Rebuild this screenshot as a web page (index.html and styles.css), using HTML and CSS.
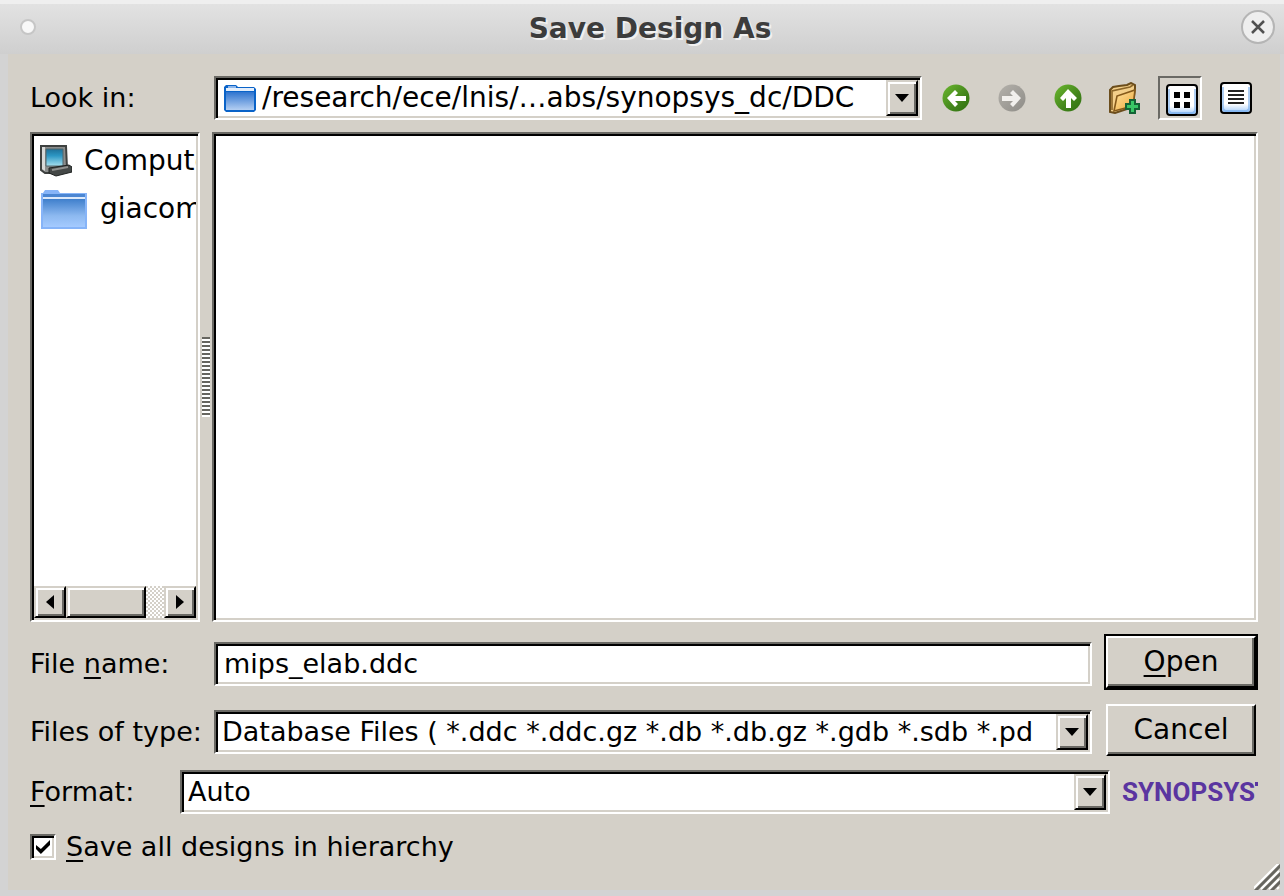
FILE: index.html
```html
<!DOCTYPE html>
<html lang="en">
<head>
<meta charset="utf-8">
<title>Save Design As</title>
<link rel="stylesheet" href="styles.css">
</head>
<body>
<svg class="defs" aria-hidden="true">
  <defs>
    <linearGradient id="green" x1="0" y1="0" x2="1" y2="1"><stop offset="0" stop-color="#6cb82f"/><stop offset=".6" stop-color="#43851c"/><stop offset="1" stop-color="#2f7010"/></linearGradient>
    <linearGradient id="gray" x1="0" y1="0" x2="1" y2="1"><stop offset="0" stop-color="#b4b1ab"/><stop offset="1" stop-color="#8e8c87"/></linearGradient>
    <linearGradient id="blue" x1="0" y1="0" x2="0" y2="1"><stop offset="0" stop-color="#2f74cf"/><stop offset="1" stop-color="#b4cff2"/></linearGradient>
    <linearGradient id="sky" x1="0" y1="0" x2="0" y2="1"><stop offset="0" stop-color="#3f7fcc"/><stop offset=".6" stop-color="#8db9f0"/><stop offset="1" stop-color="#a4caff"/></linearGradient>
    <linearGradient id="screen" x1="0" y1="0" x2="0" y2="1"><stop offset="0" stop-color="#1d6f98"/><stop offset=".4" stop-color="#2c97c4"/><stop offset="1" stop-color="#a5e0ef"/></linearGradient>
    <linearGradient id="gold" x1="0" y1="0" x2="1" y2="1"><stop offset="0" stop-color="#ffe3a0"/><stop offset="1" stop-color="#eea93c"/></linearGradient>
    <linearGradient id="tile" x1="0" y1="0" x2="0" y2="1"><stop offset="0" stop-color="#fff"/><stop offset=".7" stop-color="#fff"/><stop offset="1" stop-color="#9cc8fa"/></linearGradient>
  </defs>
</svg>
<form class="window">
  <header class="titlebar">
    <span class="menu-dot"></span>
    <h1 class="title">Save Design As</h1>
    <button type="button" class="close" aria-label="Close">
      <svg width="36" height="36" viewBox="0 0 36 36"><circle cx="18" cy="18" r="16" fill="#eee" stroke="#b5b5b5" stroke-width="2"/><path d="M12 12l12 12M24 12L12 24" stroke="#505050" stroke-width="2.500"/></svg>
    </button>
  </header>
  <main class="content">
    <div class="look-row">
      <label class="label" for="dir">Look in:</label>
      <div class="sunken combo look">
        <svg class="combo-icon" width="32" height="28" viewBox="0 0 32 28"><path d="M0 26V3l2-2h10l2 2h16l2 2v21l-2 2H2z" fill="#0a63c8"/><path d="M2 4h28v3H2z" fill="#e4eefb"/><path d="M4 2h8v2H4z" fill="#8cb6ec"/><path d="M2 8h28v18H2z" fill="url(#blue)"/></svg>
        <select class="field path" id="dir"><option>/research/ece/lnis/…abs/synopsys_dc/DDC</option></select>
        <span class="raised arrow"><svg width="16" height="8" viewBox="0 0 16 8"><path d="M1 0h14L8 8z"/></svg></span>
      </div>
      <div class="tools">
        <button type="button" class="tool" aria-label="Back"><svg width="28" height="28" viewBox="0 0 28 28"><circle cx="14" cy="14" r="13.500" fill="url(#green)"/><path d="M5 14l8-8 3 3-3 3h11v5H13l3 3-3 3z" fill="#fff"/></svg></button>
        <button type="button" class="tool" aria-label="Forward" disabled><svg width="28" height="28" viewBox="0 0 28 28"><circle cx="14" cy="14" r="13.500" fill="url(#gray)"/><path d="M23 14l-8-8-3 3 3 3H4v5h11l-3 3 3 3z" fill="#f2f0ed"/></svg></button>
        <button type="button" class="tool" aria-label="Parent directory"><svg width="28" height="28" viewBox="0 0 28 28"><circle cx="14" cy="14" r="13.500" fill="url(#green)"/><path d="M14 5l9 9-3 3-3-3v10h-5V14l-3 3-3-3z" fill="#fff"/></svg></button>
        <button type="button" class="tool" aria-label="Create new folder"><svg width="32" height="32" viewBox="0 0 32 32"><path d="M2 30V8l3-3 6-1 8-1 4-2 4 2v3l-2 19-18 6z" fill="#f3cf8a" stroke="#6b4d1c" stroke-width="2"/><path d="M4 28V9l18-4 3-2" fill="none" stroke="#8a6528" stroke-width="1.6"/><path d="M6 29L9 14 27 8l-2 16z" fill="url(#gold)" stroke="#85591a" stroke-width="1.6"/><path d="M22 18h5v4h4v5h-4v4h-5v-4h-4v-5h4z" fill="#39c766" stroke="#146336" stroke-width="2"/></svg></button>
        <button type="button" class="tool pressed" aria-label="List view" aria-pressed="true"><svg width="32" height="32" viewBox="0 0 32 32"><rect x="1" y="1" width="30" height="30" rx="3" fill="url(#tile)" stroke="#000" stroke-width="2"/><path d="M3 5v22l2 2h22l2-2V5" fill="none" stroke="#5d9ee8" stroke-opacity=".5" stroke-width="2"/><path d="M8 8h6v6H8zM18 8h6v6h-6zM8 18h6v6H8zM18 18h6v6h-6z"/></svg></button>
        <button type="button" class="tool" aria-label="Detail view"><svg width="32" height="32" viewBox="0 0 32 32"><rect x="1" y="1" width="30" height="30" rx="3" fill="url(#tile)" stroke="#000" stroke-width="2"/><path d="M3 5v22l2 2h22l2-2V5" fill="none" stroke="#5d9ee8" stroke-opacity=".5" stroke-width="2"/><path d="M8 9h16M8 13h16M8 17h16M8 21h16" stroke="#222" stroke-width="2"/></svg></button>
      </div>
    </div>

    <div class="panes">
      <nav class="sunken sidebar" aria-label="Places">
        <ul class="places">
          <li class="place"><svg width="32" height="32" viewBox="0 0 32 32"><path d="M1 1h25l1 22-7 5H5l-4-3z" fill="#8b8d8c" stroke="#3e4140" stroke-width="2"/><path d="M2 2h3v24l-3-2z" fill="#d7d9d8"/><path d="M6 4h17v17H6z" fill="url(#screen)" stroke="#50666d"/><path d="M9 23l20-3 3 2v5l-16 4-7-3z" fill="#444847" stroke="#1f2221"/><path d="M12 25l16-3" stroke="#90918f" stroke-width="2"/></svg><span>Computer</span></li>
          <li class="place"><svg width="48" height="40" viewBox="0 -2 48 40"><path d="M1 38V2h2l2-3h13l2 3h27v36z" fill="#86b4f8"/><path d="M3 3h42v3H3z" fill="#4b86d2"/><path d="M3 6h42v2H3z" fill="#dce9fb"/><path d="M3 8h42v28H3z" fill="url(#sky)"/></svg><span>giacom</span></li>
        </ul>
        <div class="scrollbar">
          <button type="button" class="raised step" aria-label="Scroll left"><svg width="8" height="14" viewBox="0 0 8 14"><path d="M8 0v14L0 7z"/></svg></button>
          <span class="raised thumb"></span>
          <span class="track"></span>
          <button type="button" class="raised step" aria-label="Scroll right"><svg width="8" height="14" viewBox="0 0 8 14"><path d="M0 0v14l8-7z"/></svg></button>
        </div>
      </nav>
      <div class="splitter"><span class="grip"></span></div>
      <section class="sunken files" aria-label="Files"></section>
    </div>

    <div class="file-grid">
      <label class="label" for="name">File <u>n</u>ame:</label>
      <div class="sunken combo"><input class="field name" id="name" type="text" value="mips_elab.ddc"></div>
      <button type="submit" class="push default"><span><u>O</u>pen</span></button>
      <label class="label" for="type">Files of type:</label>
      <div class="sunken combo">
        <select class="field" id="type"><option>Database Files ( *.ddc *.ddc.gz *.db *.db.gz *.gdb *.sdb *.pd</option></select>
        <span class="raised arrow"><svg width="16" height="8" viewBox="0 0 16 8"><path d="M1 0h14L8 8z"/></svg></span>
      </div>
      <button type="button" class="push cancel">Cancel</button>
    </div>

    <div class="format-row">
      <label class="label" for="format"><u>F</u>ormat:</label>
      <div class="sunken combo">
        <select class="field" id="format"><option>Auto</option></select>
        <span class="raised arrow"><svg width="16" height="8" viewBox="0 0 16 8"><path d="M1 0h14L8 8z"/></svg></span>
      </div>
      <span class="logo">SYNOPSYS<i class="mark"></i></span>
    </div>

    <div class="check-row">
      <input class="check" id="all" type="checkbox" checked>
      <label for="all"><u>S</u>ave all designs in hierarchy</label>
    </div>
    <svg class="resize" width="26" height="26" viewBox="0 0 26 26" aria-hidden="true"><path d="M-1 25L25-1M7 25L25 7M15 25L25 15M23 25l2-2" stroke="#fff" stroke-width="2"/><path d="M1 27L27 1M9 27L27 9M17 27l10-10" stroke="#66655f" stroke-width="3"/></svg>
  </main>
</form>
</body>
</html>
```
FILE: styles.css
```css
* { box-sizing: border-box; }

body {
  margin: 0;
  background: #d3d3d3;
  color: #000;
  font: 27px/36px "DejaVu Sans", sans-serif;
}

.defs { position: absolute; width: 0; height: 0; }

svg { display: block; flex: none; }

u {
  text-decoration-thickness: 2px;
  text-underline-offset: 4px;
  text-decoration-skip-ink: none;
}

.window {
  display: flex;
  flex-direction: column;
  min-height: 100vh;
}

.titlebar {
  display: flex;
  align-items: center;
  height: 54px;
  padding: 0 8px 0 20px;
  background: linear-gradient(#efefef 0 4px, #e2e2e2 4px, #cfcfcf);
}

.menu-dot {
  width: 16px;
  height: 16px;
  border: 2px solid #c6c6c6;
  border-radius: 50%;
  background: #f8f8f8;
}

.title {
  flex: 1;
  margin: 0;
  padding: 4px 0 0 24px;
  color: #3c3c3c;
  font-size: 28px;
  text-align: center;
  text-shadow: 2px 2px #f0f0f0;
}

.close {
  padding: 0;
  border: 0;
  background: none;
}

.content {
  position: relative;
  display: flex;
  flex: 1;
  flex-direction: column;
  margin: 0 4px 6px 8px;
  padding: 22px 22px 30px;
  background: #d4d0c8;
}

.label { white-space: nowrap; }

.sunken {
  padding: 2px;
  border: 2px solid;
  border-color: #6a6964 #fff #fff #6a6964;
  background: #fff;
  box-shadow: inset 2px 2px #000, inset -2px -2px #d4d0c8;
}

.raised {
  border: 2px solid;
  border-color: #d4d0c8 #000 #000 #d4d0c8;
  background: #d4d0c8;
  box-shadow: inset 2px 2px #fff, inset -2px -2px #6a6964;
}

.combo {
  display: flex;
  flex: 1;
  min-width: 0;
  height: 44px;
}

.look { font-size: 28px; }

.combo-icon { margin: 4px 0 0 6px; }

.field {
  flex: 1;
  min-width: 0;
  margin: 0;
  padding: 0 4px;
  border: 0;
  outline: 0;
  background: none;
  color: inherit;
  font: inherit;
  appearance: none;
}

.name,
.path { padding: 0 6px; }

.arrow {
  display: flex;
  align-items: center;
  justify-content: center;
  width: 32px;
}

.look-row {
  display: flex;
  gap: 12px;
  align-items: center;
}

.look-row .label { width: 172px; }

.tools { display: flex; gap: 12px; }

.tool {
  display: flex;
  align-items: center;
  justify-content: center;
  width: 44px;
  height: 44px;
  padding: 0;
  border: 2px solid transparent;
  background: none;
}

.pressed {
  padding: 4px 0 0 4px;
  border-color: #6a6964 #fff #fff #6a6964;
}

.panes {
  display: flex;
  flex: 1;
  margin: 12px 0;
}

.sidebar {
  display: flex;
  flex-direction: column;
  width: 170px;
  font-size: 28px;
}

.places {
  flex: 1;
  margin: 0;
  padding: 1px 0 0;
  overflow: hidden;
  list-style: none;
}

.place {
  display: flex;
  gap: 12px;
  align-items: center;
  height: 48px;
  padding-left: 6px;
}

.scrollbar { display: flex; height: 32px; }

.step {
  display: flex;
  align-items: center;
  justify-content: center;
  width: 32px;
  padding: 0;
}

.thumb { width: 80px; }

.track {
  flex: 1;
  background: repeating-conic-gradient(#fff 0 25%, #d4d0c8 0 50%) 0 0 / 4px 4px;
}

.splitter {
  display: flex;
  align-items: center;
  justify-content: center;
  width: 12px;
}

.grip {
  width: 8px;
  height: 80px;
  background: repeating-linear-gradient(#66655f 0 2px, #fff 2px 4px);
}

.files { flex: 1; }

.file-grid {
  display: grid;
  grid-template-columns: 172px 1fr 154px;
  gap: 14px 12px;
  align-items: center;
}

.file-grid .label,
.file-grid .combo { margin-top: 4px; }

.push {
  height: 52px;
  margin: 0 2px;
  padding: 0;
  border: 2px solid;
  border-color: #fff #000 #000 #fff;
  background: #d4d0c8;
  color: inherit;
  font: inherit;
  font-size: 28px;
  box-shadow: inset -2px -2px #6a6964;
}

.default {
  margin: 2px;
  outline: 2px solid #000;
}

.format-row {
  display: flex;
  align-items: center;
  margin-top: 14px;
}

.format-row .label { width: 150px; }

.logo {
  display: flex;
  justify-content: space-between;
  width: 136px;
  margin-left: 12px;
  color: #5a35a0;
  font: bold 26px/36px Roboto, sans-serif;
}

.mark {
  width: 3px;
  height: 4px;
  margin-top: 8px;
  background: #5a35a0;
}

.check-row {
  display: flex;
  gap: 10px;
  align-items: center;
  height: 26px;
  margin-top: 20px;
}

.check {
  width: 26px;
  height: 26px;
  margin: 0;
  padding: 4px;
  border: 2px solid;
  border-color: #6a6964 #fff #fff #6a6964;
  background: #fff;
  box-shadow: inset 2px 2px #000, inset -2px -2px #d4d0c8;
  appearance: none;
}

.check:checked::before {
  display: block;
  width: 14px;
  height: 14px;
  background: #000;
  clip-path: polygon(0 35%, 35% 65%, 100% 0, 100% 35%, 35% 100%, 0 65%);
  content: "";
}

.resize {
  position: absolute;
  right: 0;
  bottom: 0;
}
```
